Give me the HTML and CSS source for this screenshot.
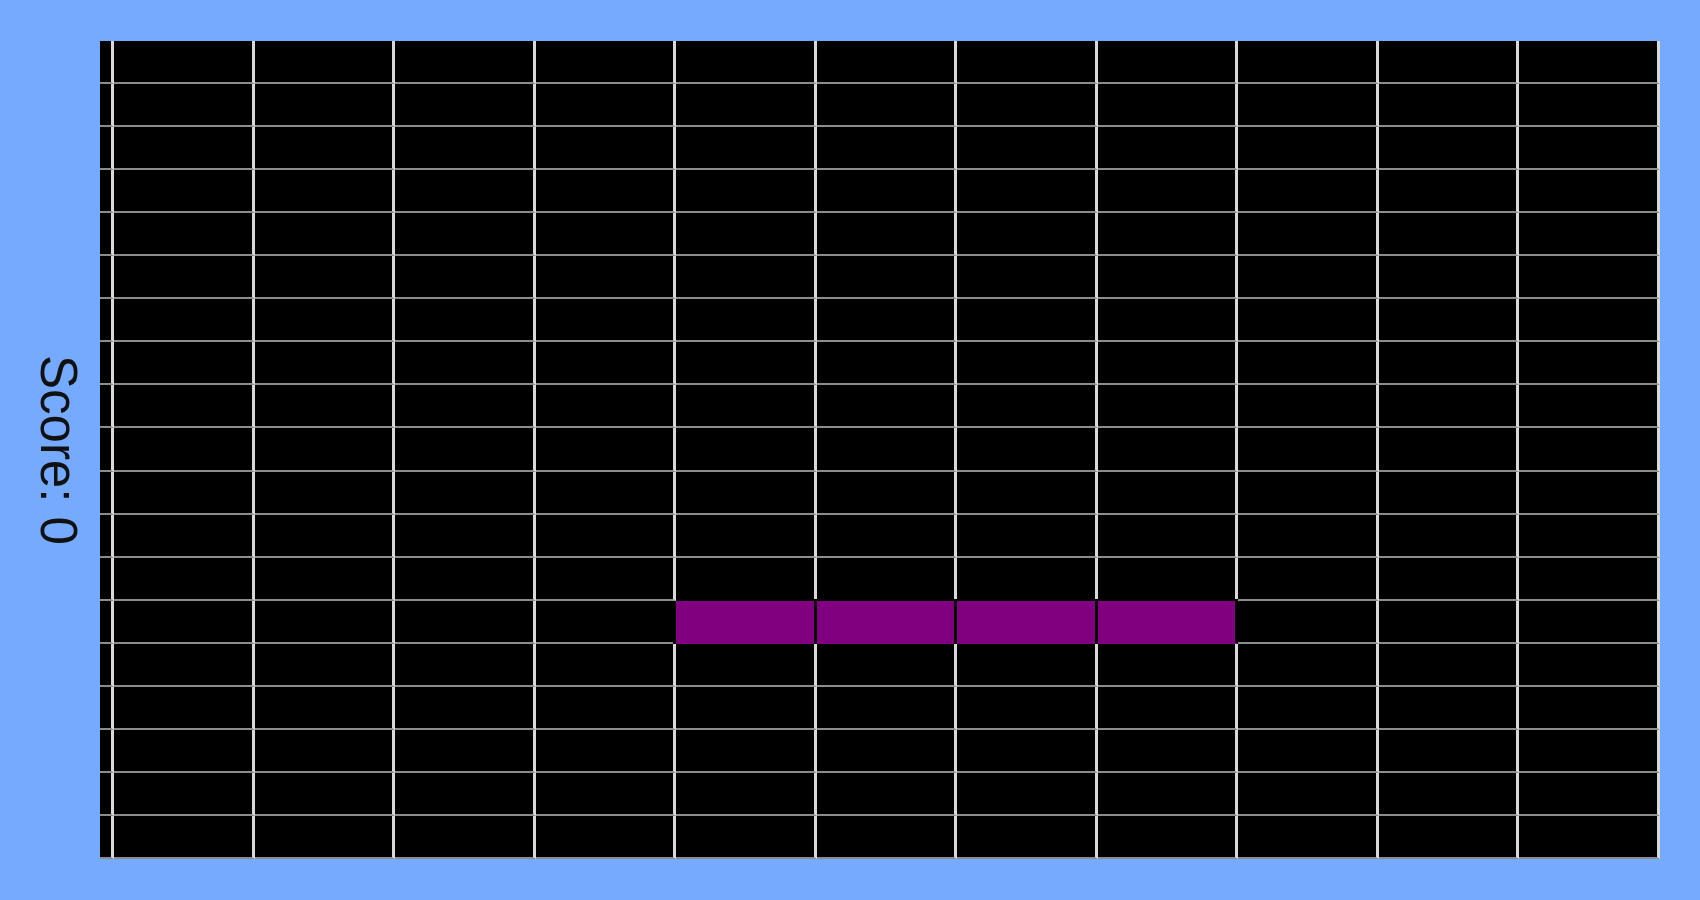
FILE: index.html
```html
<!DOCTYPE html>
<html lang="en">
<head>
    <meta charset="UTF-8">
    <meta name="viewport" content="width=device-width, initial-scale=1.0">
    <title>Snake</title>
    <link rel="stylesheet" href="styles.css">
</head>
<body>
    <div id="game">
        <div id="score-panel">
            <span id="score">Score: 0</span>
        </div>
        <div id="board">
            <!-- cells are built by the script -->
        </div>
    </div>

    <script>
        const COLS = 12;
        const ROWS = 19;
        const board = document.getElementById('board');
        const cells = [];

        for (let i = 0; i < COLS * ROWS; i++) {
            const cell = document.createElement('div');
            cell.className = 'cell';
            board.appendChild(cell);
            cells.push(cell);
        }

        // starting snake, head on the right
        const snake = [
            { x: 5, y: 13 },
            { x: 6, y: 13 },
            { x: 7, y: 13 },
            { x: 8, y: 13 }
        ];

        function draw() {
            cells.forEach(cell => cell.classList.remove('snake'));
            snake.forEach(part => {
                cells[part.y * COLS + part.x].classList.add('snake');
            });
        }

        let score = 0;
        document.getElementById('score').textContent = 'Score: ' + score;
        draw();
    </script>
</body>
</html>
```

FILE: styles.css
```css
body {
    margin: 0;
    background-color: #75aaff;
    font-family: "Liberation Sans", Arial, sans-serif;
    color: #111;
}
#game {
    display: flex;
    height: 900px;
    padding: 41px 40px 41px 0;
    box-sizing: border-box;
}
#score-panel {
    flex: 0 0 100px;
    display: flex;
    align-items: center;
    justify-content: center;
    padding-left: 17px;
    box-sizing: border-box;
}
#score {
    writing-mode: vertical-rl;
    font-size: 51px;
    white-space: nowrap;
}
#board {
    flex: 0 0 1560px;
    display: grid;
    grid-template-columns: 14px repeat(11, 1fr);
    grid-template-rows: repeat(19, 1fr);
    background-color: #000;
}
.cell {
    border-right: 3px solid #d9d9d9;
    border-bottom: 2px solid #8c8c8c;
}
.cell.snake {
    background-color: #800080;
    border-right-color: #000;
    border-bottom-color: #800080;
    box-shadow: 0 -2px 0 #000, -3px 0 0 #000;
}
```
